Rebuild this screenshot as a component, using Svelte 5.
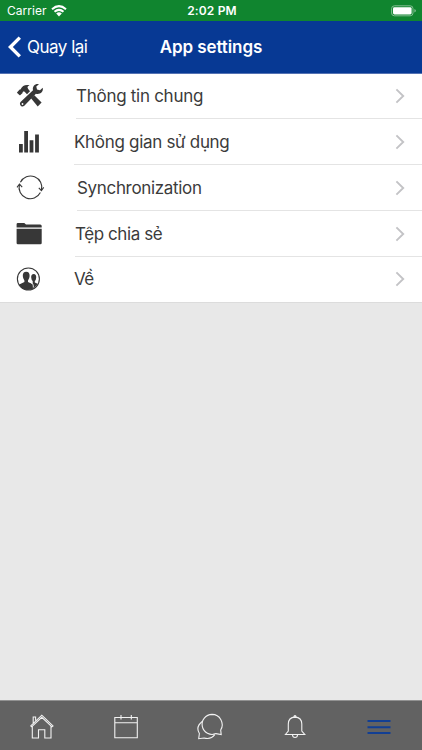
<script lang="ts">
	type Icon = "tools" | "chart" | "sync" | "folder" | "people";
	type Setting = { name: string; icon: Icon; inset: number; spacing: number };

	const settings: Setting[] = [
		{ name: "Thông tin chung", icon: "tools", inset: 76, spacing: -0.28 },
		{ name: "Không gian sử dụng", icon: "chart", inset: 74, spacing: -0.31 },
		{ name: "Synchronization", icon: "sync", inset: 77, spacing: -0.33 },
		{ name: "Tệp chia sẻ", icon: "folder", inset: 75, spacing: -0.42 },
		{ name: "Về", icon: "people", inset: 74, spacing: -0.5 },
	];

	const tabs = ["Home", "Calendar", "Chat", "Notifications", "Menu"];
	let activeTab = $state("Menu");
</script>

{#snippet settingIcon(icon: Icon)}
	<svg class="icon" viewBox="0 0 30 30" aria-hidden="true">
		{#if icon === "tools"}
			<path
				d="M2.2 11.2 4 9.2C4.6 8.6 5.2 9 5.6 8.3 7.2 4.7 10.4 3.3 14.6 4.3 12.4 5 12 6.4 13.2 8L15 10.2 12 13.2 9.6 10.8C8.4 10 7.4 10.7 7.6 11.9L5.4 14.1Q4.9 14.5 4.4 14L2.2 12Q1.8 11.6 2.2 11.2Z"
			/>
			<path d="M16 17.3 19.3 14.2 26.6 21.5 22.7 25.6Z" />
			<path
				d="M27.7 6.8 25 9.3 22 8.4 21.3 5.6 23.9 3.2C20 2.5 17.2 5.4 18 9.2L5.8 20.8C3.4 23.2 6.6 27.3 9.3 24.8L20.9 12.8C24.8 13.9 28.8 11 27.7 6.8Z"
			/>
			<circle class="hole" cx="7.5" cy="23" r="0.9" />
		{:else if icon === "chart"}
			<path d="M4 17h3.8v8.4H4zM9.2 4H13v21.4H9.2zM14.6 13.2h3.8v12.2h-3.8zM20.1 7.4h3.8v18h-3.8z" />
		{:else if icon === "sync"}
			<g class="line">
				<path d="M5.4 9.3A11.3 11.3 0 0 1 26.4 17.4" />
				<path d="M4.5 11.3A11.3 11.3 0 0 0 25.4 19.6" />
				<path d="m2 14.4 2.5-3.2 2.7 3M23.8 14.8l2.6 2.8 2.3-3.2" />
			</g>
		{:else if icon === "folder"}
			<path d="M1.6 8.6V5.2Q1.6 4 2.8 4h6.5l1.7 1.5h14.2Q26.7 5.5 26.7 7v1.6z" />
			<path d="M1.6 9.8h25.1V24q0 1.3-1.3 1.3H2.9q-1.3 0-1.3-1.3z" />
		{:else}
			<circle class="line" cx="13.4" cy="15" r="11" />
			<path
				d="M17.7 19.2V17.1Q16.3 15.9 16.2 13.6C16 11.2 17 10 18.7 10s2.7 1.2 2.5 3.6q-.1 2.3-1.4 3.5v1.5l2.8 1.2C21.2 22.6 18.6 24.7 15.8 25.4z"
			/>
			<path
				d="M4.2 20.4 9.4 18V16.4Q7.9 14.8 7.8 12.1C7.6 9.2 8.9 7.8 11.2 7.8s3.6 1.4 3.4 4.3q-.1 2.7-1.6 4.3V18l3.4 1.5q1.6.7 1.8 5.1C13 27.6 6.8 25.7 4.2 20.4z"
			/>
			<path class="divide" d="M14.8 18.2c2.1.8 3.3 1.4 3.5 3.7v1.6" />
		{/if}
	</svg>
{/snippet}

{#snippet tabIcon(name: string)}
	<svg class="tab-icon" viewBox="0 0 30 30" aria-hidden="true">
		{#if name === "Home"}
			<path d="M3.8 14.9 14.8 4.2 26 14.9l-1.1.9L14.8 6.3 4.7 15.8zM5.3 15.3V27h6.2v-8.2h6.3V27H24V15.3M6.2 12V6h2.4v3.6" />
		{:else if name === "Calendar"}
			<path d="M3.8 6.5h22.5v20.3H3.8zM3.8 11.8h22.5M10 4v4.5M20.3 4v4.5" />
		{:else if name === "Chat"}
			<path d="M17 3.4a10 10 0 1 0 4 19.2L26.2 23.5 25.7 19C29.8 12.2 25 3.4 17 3.4z" />
			<path d="M7.5 10.3C3.1 13.7 1.7 18.3 4.4 22.5L3.7 27.7 9 27c4.5 1.2 8.2.2 10.8-3.3" />
		{:else if name === "Notifications"}
			<path d="M5.4 23.5 8.3 20V13C8.3 8.7 11 6.3 15 6.1c4 .2 6.8 2.6 6.8 6.9v7l3 3.5zM12.5 24c.2 3.3 4.9 3.3 5 0M14 6.1c-.5-2 2.5-2 2 0" />
		{:else}
			<path d="M3.5 10.1h23M3.5 16.2h23M3.5 22h23" />
		{/if}
	</svg>
{/snippet}

<div class="screen">
	<div class="status">
		<span class="carrier">
			Carrier
			<svg class="wifi" viewBox="0 0 16 12" aria-hidden="true">
				<path d="M1 4.2Q8-2 15 4.2M3.5 6.8Q8 3 12.5 6.8" />
				<path class="dot" d="M5.2 8.4Q8 6.1 10.8 8.4L8 11.4z" />
			</svg>
		</span>
		<strong>2:02 PM</strong>
		<svg class="battery" viewBox="0 0 26 12" aria-hidden="true">
			<rect class="shell" x=".6" y=".8" width="21.4" height="10" rx="2.8" />
			<rect x="2" y="2.2" width="18.6" height="7.2" rx="1.4" />
			<path class="cap" d="M23.4 4.1q1.5.4 1.5 1.7t-1.5 1.7z" />
		</svg>
	</div>

	<header>
		<button type="button" class="back">
			<svg viewBox="0 0 14 22" aria-hidden="true"><path d="M11.8 1.6 2.4 11l9.4 9.4" /></svg>
			<span>Quay lại</span>
		</button>
		<h1>App settings</h1>
	</header>

	<main>
		<ul>
			{#each settings as setting}
				<li>
					{@render settingIcon(setting.icon)}
					<a href="#{setting.icon}" style:margin-left="{setting.inset - 45}px">
						<span style:letter-spacing="{setting.spacing}px">{setting.name}</span>
						<svg class="chevron" viewBox="0 0 10 16" aria-hidden="true"><path d="m1.4 1.4 6.8 6.6-6.8 6.6" /></svg>
					</a>
				</li>
			{/each}
		</ul>
	</main>

	<nav>
		{#each tabs as tab}
			<button
				type="button"
				aria-label={tab}
				data-active={activeTab === tab}
				onclick={() => (activeTab = tab)}>{@render tabIcon(tab)}</button
			>
		{/each}
	</nav>
</div>

<style>
	:global(body) {
		margin: 0;
	}

	.screen {
		display: flex;
		flex-direction: column;
		height: 750px;
		overflow: hidden;
		background: #e8e8e8;
		color: #3b3b3b;
		font-family: Inter, "Liberation Sans", sans-serif;
	}

	svg {
		display: block;
		flex: none;
	}

	button {
		padding: 0;
		border: 0;
		background: none;
		color: inherit;
		font: inherit;
	}

	.status {
		display: grid;
		grid-template-columns: 1fr auto 1fr;
		align-items: center;
		box-sizing: border-box;
		height: 21px;
		padding: 0 5px 0 7px;
		background: #10852f;
		color: #fff;
		font-size: 12px;
		letter-spacing: 0.05px;

		strong {
			font-weight: 600;
			letter-spacing: 0.15px;
		}
	}

	.carrier {
		display: flex;
		align-items: center;
		gap: 4px;
	}

	.wifi {
		width: 16px;
		height: 12px;
		fill: none;
		stroke: #fff;
		stroke-width: 2;

		.dot {
			fill: #fff;
			stroke: none;
		}
	}

	.battery {
		justify-self: end;
		width: 26px;
		height: 12px;
		fill: #fff;

		.shell {
			fill: none;
			stroke: #82bd91;
		}

		.cap {
			fill: #82bd91;
		}
	}

	header {
		display: grid;
		grid-template-columns: 1fr auto 1fr;
		align-items: center;
		box-sizing: border-box;
		height: 53px;
		padding: 0 8px;
		border-bottom: 1px solid #5472b3;
		background: #073994;
		color: #fff;
	}

	.back {
		display: flex;
		align-items: center;
		gap: 5px;
		font-size: 17px;
		letter-spacing: -0.5px;

		svg {
			width: 14px;
			height: 22px;
			fill: none;
			stroke: #fff;
			stroke-width: 3.4;
		}
	}

	h1 {
		margin: 0;
		font-size: 17px;
		font-weight: 600;
		letter-spacing: -0.1px;
	}

	main {
		flex: 1;
	}

	ul {
		padding: 0;
		margin: 0;
		border-bottom: 1px solid #dcdcdc;
		background: #fff;
		list-style: none;
	}

	li {
		display: flex;
		align-items: center;
		height: 46px;
		padding-left: 15px;

		&:first-child,
		&:last-child {
			height: 45px;
		}

		&:last-child a {
			border-bottom-color: transparent;
		}
	}

	.icon {
		width: 30px;
		height: 30px;
		margin-bottom: 1px;
		fill: #373737;

		.hole {
			fill: #fff;
		}

		.line {
			fill: none;
			stroke: #373737;
			stroke-width: 1.1;
		}

		.divide {
			fill: none;
			stroke: #fff;
			stroke-width: 0.9;
		}
	}

	a {
		display: flex;
		flex: 1;
		align-items: center;
		justify-content: space-between;
		align-self: stretch;
		padding-right: 17px;
		border-bottom: 1px solid #e4e4e4;
		color: inherit;
		font-size: 17px;
		text-decoration: none;
		white-space: nowrap;
	}

	.chevron {
		width: 10px;
		height: 16px;
		fill: none;
		stroke: #c3c3c6;
		stroke-width: 1.9;
	}

	nav {
		display: grid;
		grid-template-columns: repeat(5, 1fr);
		box-sizing: border-box;
		height: 50px;
		padding-right: 1px;
		border-top: 1px solid #929292;
		background: #626262;
		color: #f2f2f2;

		button {
			display: grid;
			place-items: center;
		}

		[data-active="true"] {
			color: #123f94;

			.tab-icon {
				stroke-width: 2;
			}
		}
	}

	.tab-icon {
		width: 30px;
		height: 30px;
		fill: none;
		stroke: currentColor;
		stroke-width: 1.1;
	}
</style>
